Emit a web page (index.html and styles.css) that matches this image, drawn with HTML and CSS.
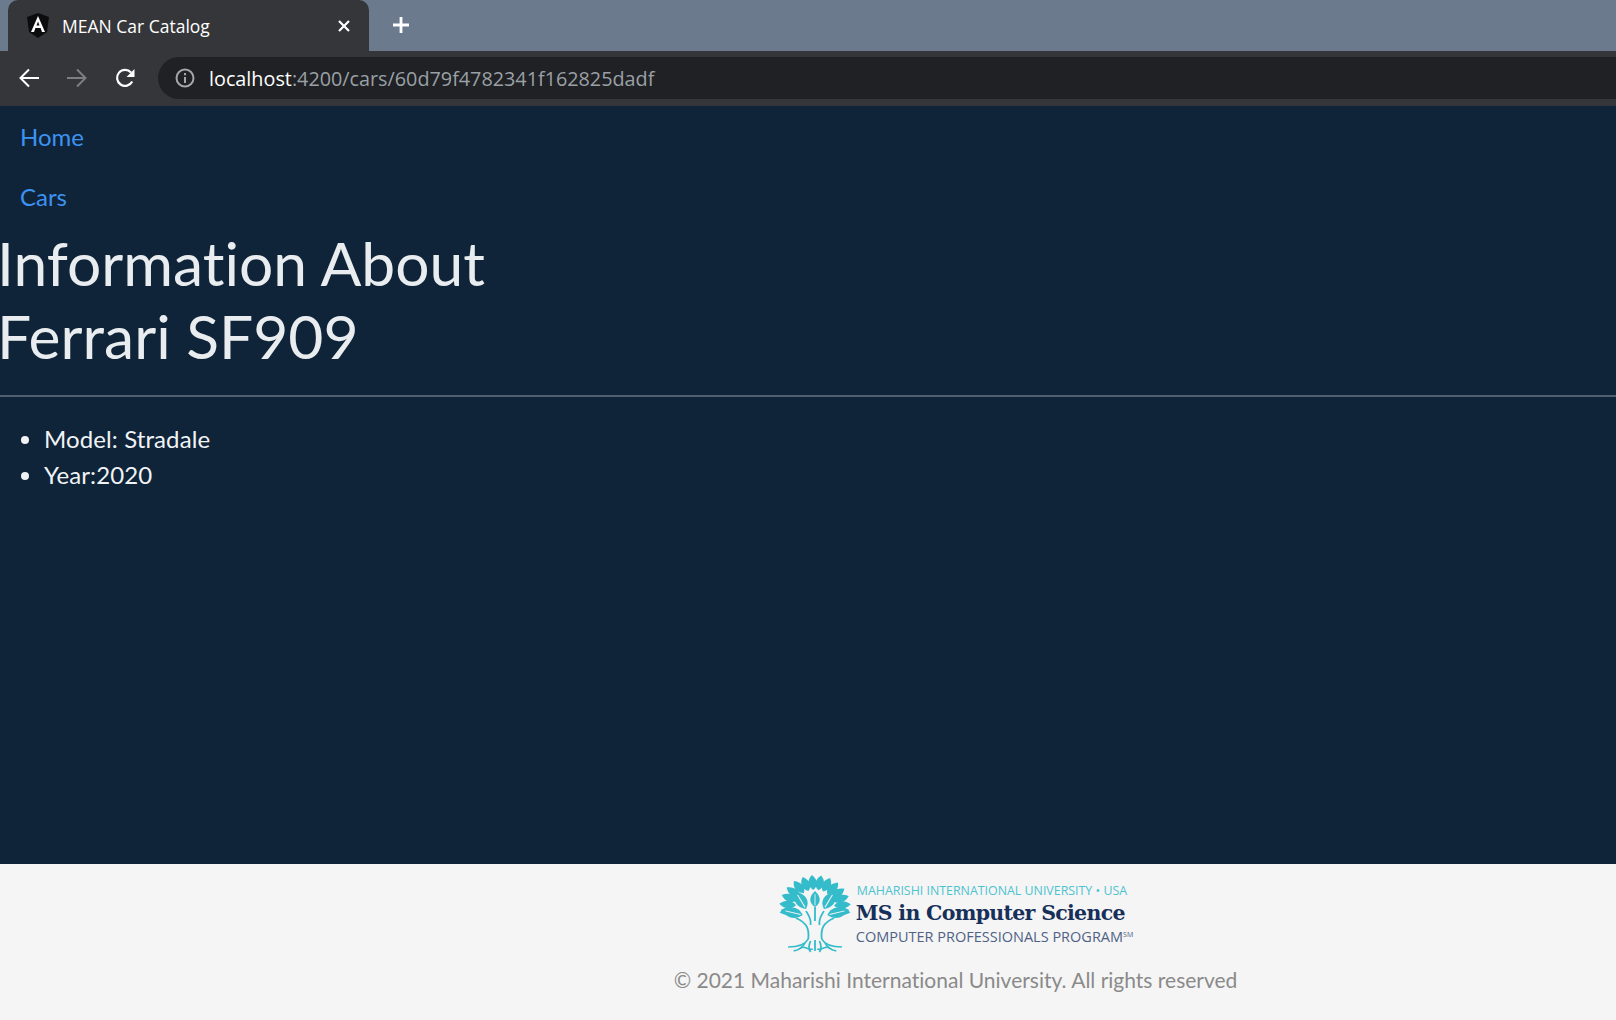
FILE: index.html
```html
<!DOCTYPE html>
<html lang="en">
<head>
    <meta charset="UTF-8">
    <title>MEAN Car Catalog</title>
    <link rel="stylesheet" href="styles.css">
</head>
<body>
    <!-- browser chrome -->
    <div class="tab-strip">
        <div class="tab">
            <svg class="tab-icon" width="24" height="26" viewBox="0 0 24 26">
                <path d="M12 0 1 4l2 15 9 6 9-6 2-15z" fill="#0c0c0e"/>
                <path d="M12 3 5 19h3l1.400-4h5.200l1.400 4h3zM10.500 12.500 12 8.500l1.500 4z" fill="#fff" fill-rule="evenodd"/>
            </svg>
            <span class="tab-title">MEAN Car Catalog</span>
            <svg class="tab-close" width="12" height="12" viewBox="0 0 12 12">
                <path d="M1 1l10 10M11 1 1 11" stroke="#fff" stroke-width="2.200"/>
            </svg>
        </div>
        <svg class="new-tab" width="18" height="18" viewBox="0 0 18 18">
            <path d="M9 1v16M1 9h16" stroke="#fff" stroke-width="2.800"/>
        </svg>
    </div>
    <div class="toolbar">
        <svg class="nav-icon" width="22" height="22" viewBox="0 0 22 22" fill="none" stroke="#fff" stroke-width="2">
            <path d="M21 11H3M11 2.500 2.500 11l8.500 8.500"/>
        </svg>
        <svg class="nav-icon" width="22" height="22" viewBox="0 0 22 22" fill="none" stroke="#7d7e80" stroke-width="2">
            <path d="M1 11h18M11 2.500l8.500 8.500-8.500 8.500"/>
        </svg>
        <svg class="nav-icon" width="22" height="22" viewBox="0 0 22 22" fill="none">
            <path d="M18.200 14.500A8 8 0 1 1 17 5.500" stroke="#fff" stroke-width="2.200"/>
            <path d="M20.500 2v8h-8z" fill="#fff"/>
        </svg>
        <div class="omnibox">
            <svg class="info-icon" width="20" height="20" viewBox="0 0 20 20" fill="none" stroke="#a5a6a8" stroke-width="2">
                <circle cx="10" cy="10" r="8.500"/>
                <path d="M10 9v6M10 5v2.200"/>
            </svg>
            <span class="url"><span class="url-host">localhost</span>:4200/cars/60d79f4782341f162825dadf</span>
        </div>
    </div>

    <!-- page -->
    <div class="page">
        <nav class="site-nav">
            <a href="#">Home</a>
            <a href="#">Cars</a>
        </nav>
        <h1>Information About<br>Ferrari SF909</h1>
        <hr>
        <ul class="car-info">
            <li>Model: Stradale</li>
            <li>Year:2020</li>
        </ul>
    </div>

    <div class="footer">
        <div class="logo">
            <svg class="tree" width="74" height="78" viewBox="4 0 66 78" preserveAspectRatio="none">
                <defs>
                    <path id="leaf" d="M0 0C-5-4-5-10 0-15C5-10 5-4 0 0Z" fill="#35bccb"/>
                    <g id="big-leaf">
                        <path d="M0 0C-7-5-7-13 0-20C7-13 7-5 0 0Z" fill="#35bccb"/>
                        <path d="M0-2V-16" stroke="#f5f5f5" stroke-width="1"/>
                    </g>
                </defs>
                <use href="#leaf" transform="rotate(-100 37 32) translate(37 15)"/>
                <use href="#leaf" transform="rotate(-84 37 32) translate(37 15)"/>
                <use href="#leaf" transform="rotate(-68 37 32) translate(37 15)"/>
                <use href="#leaf" transform="rotate(-52 37 32) translate(37 15)"/>
                <use href="#leaf" transform="rotate(-36 37 32) translate(37 15)"/>
                <use href="#leaf" transform="rotate(-20 37 32) translate(37 15)"/>
                <use href="#leaf" transform="rotate(-5 37 32) translate(37 15)"/>
                <use href="#leaf" transform="rotate(10 37 32) translate(37 15)"/>
                <use href="#leaf" transform="rotate(25 37 32) translate(37 15)"/>
                <use href="#leaf" transform="rotate(40 37 32) translate(37 15)"/>
                <use href="#leaf" transform="rotate(55 37 32) translate(37 15)"/>
                <use href="#leaf" transform="rotate(70 37 32) translate(37 15)"/>
                <use href="#leaf" transform="rotate(85 37 32) translate(37 15)"/>
                <use href="#leaf" transform="rotate(100 37 32) translate(37 15)"/>
                <use href="#big-leaf" transform="translate(26 40) rotate(-75)"/>
                <use href="#big-leaf" transform="translate(48 40) rotate(75)"/>
                <use href="#big-leaf" transform="translate(29 34) rotate(-28)"/>
                <use href="#big-leaf" transform="translate(45 34) rotate(28)"/>
                <use href="#big-leaf" transform="translate(37 32) scale(.8)"/>
                <g fill="none" stroke="#35bccb" stroke-width="1.600">
                    <path d="M31 64C32 54 30 48 20 43M43 64C42 54 44 48 54 43M33 50C34 44 31 40 29 36M41 50C40 44 43 40 45 36M37 46V32"/>
                    <path d="M31 64C28 70 20 72 13 72M43 64C46 70 54 72 61 72"/>
                    <path d="M28 68C26 73 22 75 18 76M46 68C48 73 52 75 56 76M33 66C31 71 31 74 33 77M41 66C43 71 43 74 41 77M37 65V76"/>
                    <path d="M24 73C28 70 31 76 35 74M50 73C46 70 43 76 39 74"/>
                </g>
            </svg>
            <div class="logo-text">
                <div class="logo-top">MAHARISHI INTERNATIONAL UNIVERSITY • USA</div>
                <div class="logo-title">MS in Computer Science</div>
                <div class="logo-sub">COMPUTER PROFESSIONALS PROGRAM<sup>SM</sup></div>
            </div>
        </div>
        <p class="copyright">© 2021 Maharishi International University. All rights reserved</p>
    </div>
</body>
</html>
```

FILE: styles.css
```css
html, body {
    margin: 0;
    padding: 0;
}
body {
    height: 1020px;
    overflow: hidden;
    display: flex;
    flex-direction: column;
    font-family: "Lato", "Liberation Sans", sans-serif;
    font-variant-ligatures: none;
    background-color: #0f2438;
}

/* browser chrome */
.tab-strip {
    height: 51px;
    flex: none;
    display: flex;
    align-items: flex-end;
    background-color: #6b7a8d;
    font-family: "Open Sans", "Noto Sans", sans-serif;
}
.tab {
    width: 361px;
    height: 51px;
    margin-left: 8px;
    box-sizing: border-box;
    padding: 0 19px 0 18px;
    display: flex;
    align-items: center;
    background-color: #35363a;
    border-radius: 10px 10px 0 0;
}
.tab-icon {
    margin-right: 12px;
}
.tab-title {
    flex: 1;
    color: #fff;
    font-size: 17.500px;
}
.new-tab {
    margin: 0 0 17px 23px;
}
.toolbar {
    height: 55px;
    flex: none;
    display: flex;
    align-items: center;
    box-sizing: border-box;
    padding: 0 0 1px 18px;
    background-color: #35363a;
}
.nav-icon {
    margin-right: 26px;
}
.omnibox {
    flex: 1;
    height: 42px;
    margin: 0 0 0 -4px;
    padding-left: 17px;
    display: flex;
    align-items: center;
    background-color: #202124;
    border-radius: 21px 0 0 21px;
}
.info-icon {
    margin-right: 14px;
}
.url {
    color: #9aa0a6;
    font-family: "Open Sans", "Noto Sans", sans-serif;
    font-size: 19.800px;
}
.url-host {
    color: #fff;
}

/* page */
.page {
    flex: 1;
    color: #f0f3f6;
}
.site-nav {
    padding-top: 1px;
}
.site-nav a {
    display: block;
    height: 60px;
    line-height: 60px;
    padding-left: 20px;
    font-size: 24px;
    color: #3d92f2;
    text-decoration: none;
}
h1 {
    margin: 0 0 0 -3px;
    font-size: 60.500px;
    font-weight: 400;
    line-height: 72.500px;
    color: #e9edf0;
}
hr {
    margin: 23px 0 0;
    border: none;
    border-top: 2px solid #4f6072;
}
.car-info {
    margin: 24px 0 0;
    padding-left: 44px;
    font-size: 24px;
    line-height: 36px;
    letter-spacing: 0.1px;
}

.footer {
    height: 156px;
    flex: none;
    box-sizing: border-box;
    padding: 11px 0 0 295px;
    display: flex;
    flex-direction: column;
    align-items: center;
    background-color: #f5f5f5;
}
.logo {
    display: flex;
    align-items: center;
}
.tree {
    margin-right: 4px;
}
.logo-text {
    padding-top: 2px;
}
.logo-top {
    font-family: "Open Sans", "Noto Sans", sans-serif;
    font-size: 12.400px;
    line-height: 16px;
    color: #4cc3d0;
    margin-left: 1px;
    white-space: nowrap;
}
.logo-title {
    font-family: "DejaVu Serif", "Liberation Serif", serif;
    font-size: 20.500px;
    font-weight: 700;
    line-height: 28px;
    letter-spacing: -0.7px;
    color: #16305a;
    white-space: nowrap;
}
.logo-sub {
    font-family: "Open Sans", "Noto Sans", sans-serif;
    font-size: 14.500px;
    line-height: 20px;
    color: #4f6285;
    white-space: nowrap;
}
.logo-sub sup {
    font-size: 7px;
    vertical-align: 5px;
    line-height: 0;
}
.copyright {
    margin: 14px 0 0;
    font-size: 21px;
    color: #8a8a8a;
}
```
